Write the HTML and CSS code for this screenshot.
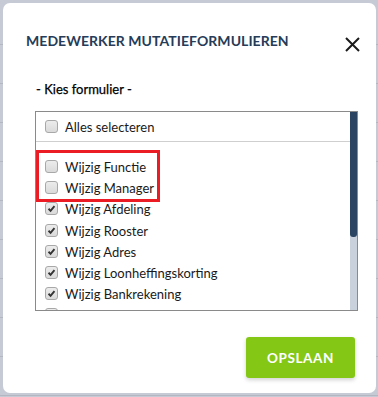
FILE: index.html
```html
<!DOCTYPE html>
<html lang="nl">
<head>
<meta charset="utf-8">
<title>Medewerker mutatieformulieren</title>
<link rel="stylesheet" href="styles.css">
</head>
<body>
<div class="modal">
  <div class="modal-header">
    <h1 class="modal-title">MEDEWERKER MUTATIEFORMULIEREN</h1>
    <button class="close" aria-label="Sluiten">
      <svg width="15" height="15" viewBox="0 0 15 15"><path d="M1 1 L14 14 M14 1 L1 14" stroke="#1b1b1b" stroke-width="2" fill="none"/></svg>
    </button>
  </div>
  <div class="field-label">- Kies formulier -</div>
  <div class="listbox">
    <div class="list-content">
      <div class="row"><span class="cb"></span><span class="txt">Alles selecteren</span></div>
      <div class="sep"></div>
      <div class="items">
        <div class="row"><span class="cb"></span><span class="txt">Wijzig Functie</span></div>
        <div class="row"><span class="cb"></span><span class="txt">Wijzig Manager</span></div>
        <div class="row"><span class="cb checked"><svg viewBox="0 0 13 13"><path d="M3 6.8 L5.4 9.2 L10 3.6" stroke="#333" stroke-width="2.2" fill="none"/></svg></span><span class="txt">Wijzig Afdeling</span></div>
        <div class="row"><span class="cb checked"><svg viewBox="0 0 13 13"><path d="M3 6.8 L5.4 9.2 L10 3.6" stroke="#333" stroke-width="2.2" fill="none"/></svg></span><span class="txt">Wijzig Rooster</span></div>
        <div class="row"><span class="cb checked"><svg viewBox="0 0 13 13"><path d="M3 6.8 L5.4 9.2 L10 3.6" stroke="#333" stroke-width="2.2" fill="none"/></svg></span><span class="txt">Wijzig Adres</span></div>
        <div class="row"><span class="cb checked"><svg viewBox="0 0 13 13"><path d="M3 6.8 L5.4 9.2 L10 3.6" stroke="#333" stroke-width="2.2" fill="none"/></svg></span><span class="txt">Wijzig Loonheffingskorting</span></div>
        <div class="row"><span class="cb checked"><svg viewBox="0 0 13 13"><path d="M3 6.8 L5.4 9.2 L10 3.6" stroke="#333" stroke-width="2.2" fill="none"/></svg></span><span class="txt">Wijzig Bankrekening</span></div>
        <div class="row"><span class="cb"></span></div>
      </div>
    </div>
    <div class="scrollbar"><div class="thumb"></div></div>
    <div class="highlight"></div>
  </div>
  <div class="modal-footer">
    <button class="btn-save">OPSLAAN</button>
  </div>
</div>
</body>
</html>
```
FILE: styles.css
```css
html, body {
  margin: 0;
  padding: 0;
}
body {
  width: 378px;
  height: 397px;
  overflow: hidden;
  background-color: #c6cad5;
  background-image: repeating-linear-gradient(to bottom, transparent 0 38px, #b2b7c2 38px 39px);
  background-position: 0 6px;
  font-family: Lato, "Noto Sans", sans-serif;
  color: #1c1c1c;
}
.modal {
  margin: 3px 2px 0 3px;
  height: 390px;
  box-sizing: border-box;
  background: #fff;
  border-radius: 7px;
  display: flex;
  flex-direction: column;
  padding: 28px 0 0 0;
  position: relative;
}
.modal-header {
  display: flex;
  justify-content: space-between;
  align-items: flex-start;
  padding: 0 16px 0 23px;
}
.modal-title {
  margin: 0;
  font-size: 14px;
  line-height: 20px;
  font-weight: 700;
  letter-spacing: 0.05px;
  color: #263c58;
}
.close {
  margin-top: 6px;
  padding: 0;
  border: 0;
  background: none;
  width: 15px;
  height: 15px;
  display: block;
}
.close svg { display: block; }
.field-label {
  margin: 27px 0 0 33px;
  font-size: 13px;
  line-height: 21px;
  color: #000;
  -webkit-text-stroke: 0.25px #000;
}
.listbox {
  margin: 11px 0 0 32px;
  width: 323px;
  height: 200px;
  box-sizing: border-box;
  border: 1px solid #8a8a8a;
  display: flex;
  overflow: hidden;
  position: relative;
}
.list-content {
  flex: 1;
  padding-top: 5px;
  min-width: 0;
}
.row {
  display: flex;
  align-items: flex-start;
  height: 21px;
  padding-left: 9px;
  font-size: 13px;
  line-height: 21px;
  white-space: nowrap;
}
.items .row { height: 21.2px; }
.cb {
  width: 13px;
  height: 13px;
  box-sizing: border-box;
  margin-top: 3px;
  border: 1px solid #a8a8a8;
  border-radius: 3px;
  background: linear-gradient(#ececec, #dadada);
  flex: none;
  display: block;
}
.cb svg {
  display: block;
  width: 11px;
  height: 11px;
}
.txt {
  margin-left: 7px;
  color: #1a1a1a;
}
.sep {
  height: 1px;
  background: #cfcfcf;
  margin-top: 3px;
}
.items {
  padding-top: 15px;
}
.scrollbar {
  width: 7px;
  flex: none;
  background: #c9d1dc;
}
.thumb {
  height: 125px;
  background: #2a4462;
  border-radius: 0 0 3px 3px;
}
.highlight {
  position: absolute;
  left: 0;
  top: 38px;
  width: 124px;
  height: 52px;
  box-sizing: border-box;
  border: 3px solid #ec1c24;
  pointer-events: none;
}
.modal-footer {
  display: flex;
  justify-content: flex-end;
  padding: 26px 21px 0 0;
}
.btn-save {
  width: 109px;
  height: 41px;
  border: 0;
  border-radius: 3px;
  background: #84c815;
  color: #fff;
  font-family: Lato, "Noto Sans", sans-serif;
  font-weight: 700;
  font-size: 13.5px;
  letter-spacing: 0.6px;
  box-shadow: 0 2px 4px rgba(0,0,0,0.18);
  padding: 0;
}
```
